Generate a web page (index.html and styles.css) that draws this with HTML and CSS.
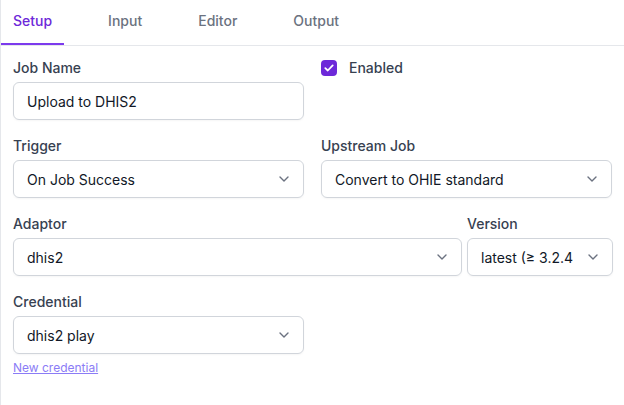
FILE: index.html
```html
<!DOCTYPE html>
<html>
<head>
<meta charset="utf-8">
<link rel="stylesheet" href="styles.css">
</head>
<body>
<div class="panel">
  <nav class="tabs">
    <div class="tab active">Setup</div>
    <div class="tab">Input</div>
    <div class="tab">Editor</div>
    <div class="tab">Output</div>
  </nav>
  <div class="form">
    <div class="row two">
      <div class="field">
        <label class="label">Job Name</label>
        <div class="input">Upload to DHIS2</div>
      </div>
      <div class="field check-field">
        <span class="checkbox">
          <svg width="10" height="8" viewBox="0 0 10 8"><path d="M1.3 4.2 L3.8 6.5 L8.7 1.4" fill="none" stroke="#fff" stroke-width="1.8" stroke-linecap="round" stroke-linejoin="round"/></svg>
        </span>
        <span class="label">Enabled</span>
      </div>
    </div>
    <div class="row two">
      <div class="field">
        <label class="label">Trigger</label>
        <div class="input select"><span class="val">On Job Success</span><svg class="chev" width="10" height="6" viewBox="0 0 10 6"><path d="M1 1 L5 5 L9 1" fill="none" stroke="#6b7280" stroke-width="1.4" stroke-linecap="round" stroke-linejoin="round"/></svg></div>
      </div>
      <div class="field">
        <label class="label">Upstream Job</label>
        <div class="input select"><span class="val">Convert to OHIE standard</span><svg class="chev" width="10" height="6" viewBox="0 0 10 6"><path d="M1 1 L5 5 L9 1" fill="none" stroke="#6b7280" stroke-width="1.4" stroke-linecap="round" stroke-linejoin="round"/></svg></div>
      </div>
    </div>
    <div class="row adaptor">
      <div class="field grow">
        <label class="label">Adaptor</label>
        <div class="input select"><span class="val">dhis2</span><svg class="chev" width="10" height="6" viewBox="0 0 10 6"><path d="M1 1 L5 5 L9 1" fill="none" stroke="#6b7280" stroke-width="1.4" stroke-linecap="round" stroke-linejoin="round"/></svg></div>
      </div>
      <div class="field version">
        <label class="label">Version</label>
        <div class="input select short"><span class="val">latest (≥ 3.2.4</span><svg class="chev" width="10" height="6" viewBox="0 0 10 6"><path d="M1 1 L5 5 L9 1" fill="none" stroke="#6b7280" stroke-width="1.4" stroke-linecap="round" stroke-linejoin="round"/></svg></div>
      </div>
    </div>
    <div class="row two">
      <div class="field">
        <label class="label">Credential</label>
        <div class="input select"><span class="val">dhis2 play</span><svg class="chev" width="10" height="6" viewBox="0 0 10 6"><path d="M1 1 L5 5 L9 1" fill="none" stroke="#6b7280" stroke-width="1.4" stroke-linecap="round" stroke-linejoin="round"/></svg></div>
        <a class="link" href="#">New credential</a>
      </div>
    </div>
  </div>
</div>
</body>
</html>
```
FILE: styles.css
```css
* { box-sizing: border-box; }
html, body { margin: 0; padding: 0; background: #fff; }
body {
  font-family: Inter, "Noto Sans", sans-serif;
  font-size: 14px;
  color: #111827;
}
.panel {
  width: 624px;
  height: 405px;
  border-left: 1px solid #e5e7eb;
}
.tabs {
  display: flex;
  gap: 32px;
  height: 46px;
  border-bottom: 1px solid #e5e7eb;
  padding-left: 0;
}
.tab {
  padding: 11px 12px 0 12px;
  height: 45px;
  line-height: 20px;
  font-weight: 500;
  color: #6b7280;
  border-bottom: 2px solid transparent;
}
.tab.active {
  color: #6d28d9;
  border-bottom-color: #7c3aed;
}
.form {
  padding: 12px 11px 0 12px;
  display: flex;
  flex-direction: column;
  gap: 16px;
}
.row.two {
  display: grid;
  grid-template-columns: 291px 291px;
  column-gap: 17px;
}
.row.adaptor {
  display: flex;
  gap: 5px;
}
.grow { flex: 1; }
.version { width: 146px; }
.field { display: flex; flex-direction: column; }
.label {
  display: block;
  line-height: 20px;
  font-weight: 500;
  color: #374151;
  margin-bottom: 4px;
}
.check-field {
  flex-direction: row;
  align-items: flex-start;
  gap: 12px;
}
.checkbox {
  width: 16px;
  height: 16px;
  margin-top: 2px;
  border-radius: 4px;
  background: #6d28d9;
  display: flex;
  align-items: center;
  justify-content: center;
}
.input {
  height: 38px;
  border: 1px solid #d1d5db;
  border-radius: 6px;
  padding: 0 13px;
  display: flex;
  align-items: center;
  color: #111827;
  box-shadow: 0 1px 2px rgba(0,0,0,0.04);
}
.select { justify-content: space-between; padding-right: 14px; }
.val { white-space: nowrap; overflow: hidden; }
.chev { flex: none; }
.link {
  margin-top: 6px;
  font-size: 12px;
  line-height: 16px;
  color: #8b7cf6;
  text-decoration: underline;
}
```
